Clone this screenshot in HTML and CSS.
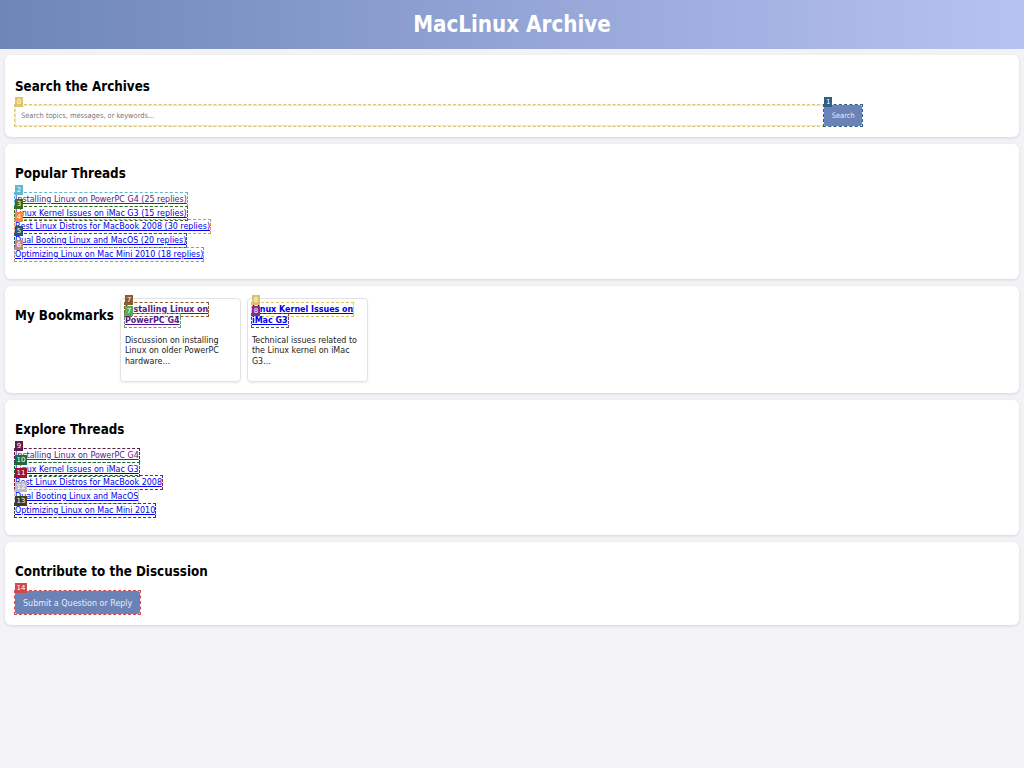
FILE: index.html
```html
<!DOCTYPE html>
<html lang="en">
<head>
<meta charset="utf-8">
<title>MacLinux Archive</title>
<link rel="stylesheet" href="styles.css">
</head>
<body>
<header class="site-header">
  <h1>MacLinux Archive</h1>
</header>
<main class="content">
  <section class="panel search-panel">
    <h2>Search the Archives</h2>
    <form class="search" onsubmit="return false">
      <span class="mk m0 search-field"><input type="text" placeholder="Search topics, messages, or keywords..."><span class="tag">0</span></span><span class="mk m1"><button type="submit" class="btn btn-small">Search</button><span class="tag">1</span></span>
    </form>
  </section>

  <section class="panel">
    <h2>Popular Threads</h2>
    <ul class="thread-list">
      <li><a href="#" class="mk m2 visited">Installing Linux on PowerPC G4 (25 replies)<span class="tag">2</span></a></li>
      <li><a href="#" class="mk m3">Linux Kernel Issues on iMac G3 (15 replies)<span class="tag">3</span></a></li>
      <li><a href="#" class="mk m4">Best Linux Distros for MacBook 2008 (30 replies)<span class="tag">4</span></a></li>
      <li><a href="#" class="mk m5">Dual Booting Linux and MacOS (20 replies)<span class="tag">5</span></a></li>
      <li><a href="#" class="mk m6">Optimizing Linux on Mac Mini 2010 (18 replies)<span class="tag">6</span></a></li>
    </ul>
  </section>

  <section class="panel bookmarks">
    <h2>My Bookmarks</h2>
    <div class="cards">
      <article class="card">
        <h3><a href="#" class="visited"><span class="mk m7a">Installing Linux on<span class="tag">7</span></span> <span class="mk m7b">PowerPC G4<span class="tag">7</span></span></a></h3>
        <p>Discussion on installing Linux on older PowerPC hardware...</p>
      </article>
      <article class="card">
        <h3><a href="#"><span class="mk m8a">Linux Kernel Issues on<span class="tag">8</span></span> <span class="mk m8b">iMac G3<span class="tag">8</span></span></a></h3>
        <p>Technical issues related to the Linux kernel on iMac G3...</p>
      </article>
    </div>
  </section>

  <section class="panel">
    <h2>Explore Threads</h2>
    <ul class="thread-list">
      <li><a href="#" class="mk m9 visited">Installing Linux on PowerPC G4<span class="tag">9</span></a></li>
      <li><a href="#" class="mk m10">Linux Kernel Issues on iMac G3<span class="tag">10</span></a></li>
      <li><a href="#" class="mk m11">Best Linux Distros for MacBook 2008<span class="tag">11</span></a></li>
      <li><a href="#" class="mk m12">Dual Booting Linux and MacOS<span class="tag">12</span></a></li>
      <li><a href="#" class="mk m13">Optimizing Linux on Mac Mini 2010<span class="tag">13</span></a></li>
    </ul>
  </section>

  <section class="panel">
    <h2>Contribute to the Discussion</h2>
    <span class="mk m14 cta"><button type="button" class="btn btn-large">Submit a Question or Reply</button><span class="tag">14</span></span>
  </section>
</main>
</body>
</html>
```

FILE: styles.css
```css
html, body {
  margin: 0;
  padding: 0;
}

body {
  background: #f3f3f7;
  font-family: "DejaVu Sans Condensed", "DejaVu Sans", sans-serif;
  font-stretch: condensed;
  font-size: 8.9px;
  color: #222;
}

.site-header {
  height: 49px;
  background: linear-gradient(to right, #6e86b8, #b7c2f2);
}

.site-header h1 {
  margin: 0;
  line-height: 49px;
  font-size: 22.2px;
  font-weight: bold;
  color: #fff;
  text-align: center;
}

.content {
  padding: 6px 5px;
  display: flex;
  flex-direction: column;
  gap: 7px;
}

.panel {
  background: #fff;
  border-radius: 6px;
  box-shadow: 0 1px 3px rgba(0, 0, 0, 0.12);
  padding: 10px;
}

.panel h2 {
  margin: 12px 0 11px;
  font-size: 13.3px;
  line-height: 16px;
  color: #000;
}

.search-panel h2 {
  margin: 14px 0 10px;
}

/* search */
.search {
  display: flex;
  align-items: flex-start;
  margin-bottom: 1px;
}

.search-field {
  flex: 0 0 calc(80% + 14px);
}

.search-field input {
  display: block;
  width: 100%;
  box-sizing: border-box;
  height: 21px;
  padding: 0 5px;
  border: 1px solid #e4e4ea;
  font-family: "DejaVu Sans Condensed", "DejaVu Sans", sans-serif;
  font-stretch: condensed;
  font-size: 7.4px;
  color: #333;
  outline: none;
}

.search-field input::placeholder {
  color: #777;
}

.btn {
  display: block;
  border: none;
  background: #6a82b6;
  color: #e8edf8;
  font-family: "DejaVu Sans Condensed", "DejaVu Sans", sans-serif;
  font-stretch: condensed;
  border-radius: 2px;
  cursor: pointer;
}

.btn-small {
  height: 21px;
  width: 38px;
  padding: 0;
  font-size: 7.4px;
}

.btn-large {
  height: 23px;
  padding: 0 8px;
  font-size: 8.9px;
}

/* thread lists */
.thread-list {
  list-style: none;
  margin: 0 0 7.5px;
  padding: 0;
}

.thread-list li {
  line-height: 13.7px;
}

a {
  color: #0000ee;
}

a.visited,
.visited {
  color: #551a8b;
}

/* bookmarks */
.bookmarks {
  display: flex;
  align-items: flex-start;
}

.bookmarks h2 {
  margin: 12px 6px 0 0;
  line-height: 15px;
}

.cards {
  display: flex;
  gap: 6px;
  margin: 2px 0 1px;
}

.card {
  width: 111px;
  border: 1px solid #e2e2e6;
  border-radius: 4px;
  box-shadow: 0 1px 2px rgba(0, 0, 0, 0.08);
  padding: 5px 4px;
  color: #222;
}

.card h3 {
  margin: 0;
  font-size: 8.9px;
  line-height: 11px;
}

.card p {
  margin: 8.6px 0 9.6px;
  line-height: 10.6px;
}

/* annotation marks */
.mk {
  position: relative;
  outline: 1px dashed var(--mk);
  outline-offset: 0;
}

a.mk,
span.mk {
  padding: 1px 0 2px;
}

.search .mk {
  display: block;
  padding: 0;
}

.cta {
  display: inline-block;
  vertical-align: top;
  margin-bottom: 1px;
  padding: 0 !important;
}

.tag {
  position: absolute;
  left: 0;
  bottom: 100%;
  min-width: 8px;
  height: 10px;
  padding: 0 1.5px;
  box-sizing: border-box;
  background: var(--mk);
  color: #fff;
  font-family: "DejaVu Sans", sans-serif;
  font-stretch: normal;
  font-size: 7px;
  font-weight: normal;
  line-height: 10px;
  text-align: center;
  text-decoration: none;
  white-space: nowrap;
}

a.mk > .tag,
span.mk > .tag {
  bottom: calc(100% - 2px);
}

.m0 { --mk: #dcc66c; }
.m1 { --mk: #2f5d8c; }
.m2 { --mk: #62b6cf; }
.m3 { --mk: #3c6a1e; }
.m4 { --mk: #f2894a; }
.m5 { --mk: #1d5b79; }
.m6 { --mk: #b98c8c; }
.m7a { --mk: #8b5a2e; }
.m7b { --mk: #4fae5a; }
.m8a { --mk: #dcc35e; }
.m8b { --mk: #8c2a8c; }
.m9 { --mk: #5b1c4b; }
.m10 { --mk: #1b6b3b; }
.m11 { --mk: #a3122c; }
.m12 { --mk: #babacc; }
.m13 { --mk: #3d3d22; }
.m14 { --mk: #d2494b; }
```
